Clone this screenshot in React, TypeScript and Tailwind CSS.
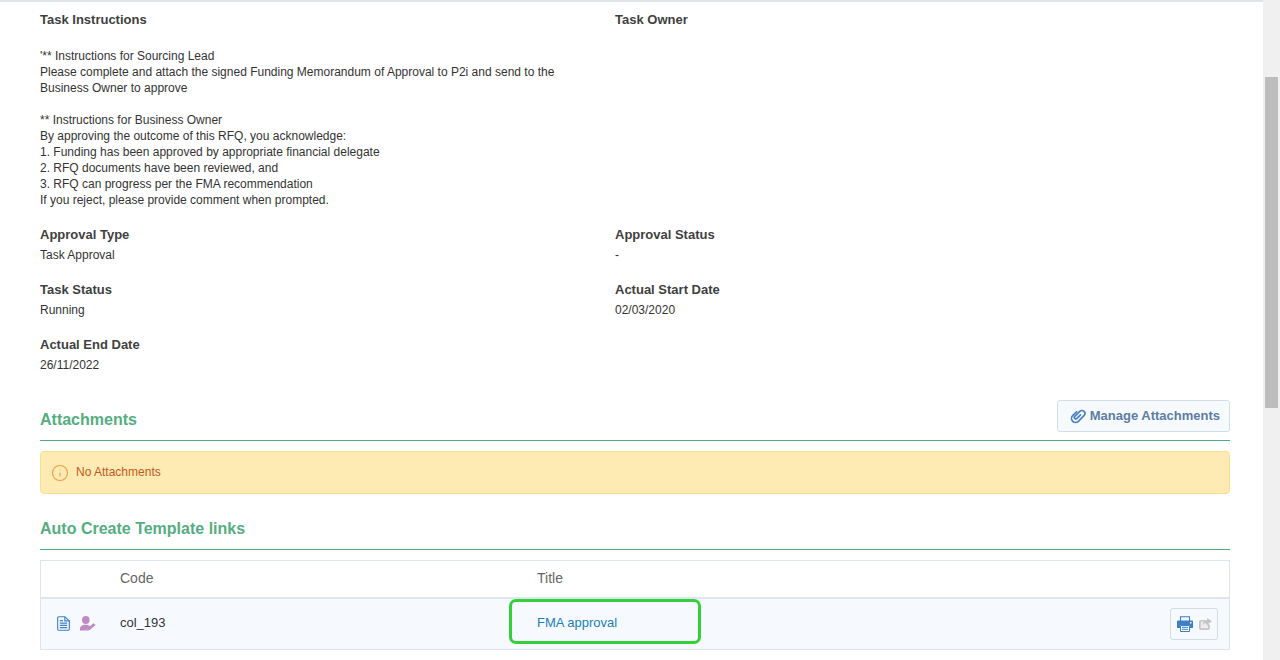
import React from 'react';
import { Info } from 'lucide-react';

function ClipIcon() {
  return (
    <svg width="16" height="16" viewBox="0 0 16 16" fill="none" stroke="#4a80c4" strokeWidth="1.7" strokeLinecap="round">
      <g transform="rotate(45 8 8)">
        <path d="M9 5.500V10.500a1.500 1.500 0 0 1-3 0V3.500a3 3 0 0 1 6 0V11.500a4 4 0 0 1-8 0V6" />
      </g>
    </svg>
  );
}

function DocIcon() {
  return (
    <svg width="13" height="15" viewBox="0 0 14 16" fill="none" stroke="#3f7fc6" strokeWidth="1.2">
      <path d="M1.900.7h6.600l4.800 4.600v8.400a1.500 1.500 0 0 1-1.500 1.600H1.900A1.300 1.300 0 0 1 .7 14V2A1.300 1.300 0 0 1 1.900.7z" />
      <path d="M8.400.9v4.300h4.600" />
      <path d="M3 5h3.500M3 7.600h8M3 10h8M3 12.500h8" strokeWidth="1.300" />
    </svg>
  );
}

function UserPenIcon() {
  return (
    <svg width="16" height="15" viewBox="0 0 16 15" fill="#bd8cc3">
      <ellipse cx="5.800" cy="4" rx="3.800" ry="4" />
      <path d="M0 14.500v-2.300c0-1.900 2.500-2.800 3.800-3.400h3.400c1.200.4 2.400.8 3.100 1.400l-3.300 3.300-.5 1z" />
      <path d="M13.400 7.200l2.300 1.900-6 5-3 .9 1-2.800z" />
    </svg>
  );
}

function PrintIcon() {
  return (
    <svg width="16" height="16" viewBox="0 0 16 16">
      <path d="M3.500 5V.7h9V5" fill="none" stroke="#3f7fc6" strokeWidth="1.100" />
      <path d="M1 4.500h14a1 1 0 0 1 1 1v6a.6.600 0 0 1-.6.600H13V9H3v3.100H.6a.6.600 0 0 1-.6-.6v-6a1 1 0 0 1 1-1z" fill="#3f7fc6" />
      <path d="M3.500 9.500h9v6h-9z" fill="#fff" stroke="#3f7fc6" />
      <path d="M5 11.300h6M5 13.300h6" stroke="#3f7fc6" />
      <rect x="13" y="6" width="1.500" height="1.500" fill="#fff" />
    </svg>
  );
}

function ShareIcon() {
  return (
    <svg width="13" height="12" viewBox="0 0 12 11" fill="none">
      <path d="M5 2.500H1.800a1 1 0 0 0-1 1v5.700a1 1 0 0 0 1 1h6.400a1 1 0 0 0 1-1V7z" fill="#ececec" stroke="#c4c4c4" strokeWidth="1.600" />
      <path d="M7.500 0L12 3 7.500 6V4.300C5.500 4.300 4.300 5 3.500 6.800c0-3 1.500-4.800 4-5z" fill="#c4c4c4" />
    </svg>
  );
}

function Field({ label, value }: { label: string; value: string }) {
  return (
    <div>
      <div className="text-[13px] leading-[20px] pt-[1px] font-bold text-[#3f3f3f]">{label}</div>
      <div className="text-[12px] leading-[16px] mt-[2px] text-[#333]">{value}</div>
    </div>
  );
}

export default function App() {
  return (
    <div className="flex h-[660px] w-[1280px] overflow-hidden bg-white font-['Liberation_Sans',Arial,sans-serif]">
      <div className="flex-1 min-w-0 flex flex-col">
        {/* top shadow */}
        <div className="h-[2px] bg-[#dfe4ea]" />

        <div className="pl-[40px] pr-[33px]">
          {/* Task instructions */}
          <div className="grid grid-cols-[575px_1fr] pt-[8px]">
            <div className="text-[13px] leading-[20px] font-bold text-[#3f3f3f]">Task Instructions</div>
            <div className="text-[13px] leading-[20px] font-bold text-[#3f3f3f]">Task Owner</div>
          </div>
          <div className="mt-[18px] w-[530px] text-[12px] leading-[16px] text-[#333]">
            <div>'** Instructions for Sourcing Lead</div>
            <div>Please complete and attach the signed Funding Memorandum of Approval to P2i and send to the Business Owner to approve</div>
            <div className="h-[16px]" />
            <div>** Instructions for Business Owner</div>
            <div>By approving the outcome of this RFQ, you acknowledge:</div>
            <div>1. Funding has been approved by appropriate financial delegate</div>
            <div>2. RFQ documents have been reviewed, and</div>
            <div>3. RFQ can progress per the FMA recommendation</div>
            <div>If you reject, please provide comment when prompted.</div>
          </div>

          {/* Fields */}
          <div className="grid grid-cols-[575px_1fr] mt-[16px] gap-y-[16px]">
            <Field label="Approval Type" value="Task Approval" />
            <Field label="Approval Status" value="-" />
            <Field label="Task Status" value="Running" />
            <Field label="Actual Start Date" value="02/03/2020" />
            <Field label="Actual End Date" value="26/11/2022" />
          </div>

          {/* Attachments */}
          <div className="flex items-end justify-between border-b border-[#4fae7d] mt-[27px] h-[41px] pb-[8px]">
            <div className="text-[16px] leading-[20px] font-bold text-[#55ad80] mb-[2px]">Attachments</div>
            <button className="flex items-center gap-[4px] h-[32px] pl-[12px] pr-[9px] border border-[#d3dde8] rounded-[3px] bg-[#f7fafd] text-[13px] font-bold text-[#5c7da3]">
              <ClipIcon />
              Manage Attachments
            </button>
          </div>

          <div className="flex items-center h-[43px] mt-[10px] pl-[10px] pb-[2px] gap-[7px] border border-[#fadf90] rounded-[4px] bg-[#fdebb3] text-[12px] text-[#c25a1d]">
            <Info size={18} strokeWidth={1.5} className="text-[#ef9f3f] mt-[2px]" />
            No Attachments
          </div>

          {/* Auto create links */}
          <div className="border-b border-[#4fae7d] mt-[25px] pb-[10px] text-[16px] leading-[20px] font-bold text-[#55ad80]">
            Auto Create Template links
          </div>

          <div className="mt-[10px] border border-[#dbe6f0]">
            <div className="grid grid-cols-[79px_417px_1fr] h-[38px] pb-[2px] items-center border-b-2 border-[#dbe6f0] text-[14px] text-[#666]">
              <div />
              <div>Code</div>
              <div>Title</div>
            </div>
            <div className="grid grid-cols-[79px_417px_1fr_auto] h-[50px] pb-[2px] items-center bg-[#f6fafe] text-[13px] text-[#333]">
              <div className="flex items-center pl-[16px] gap-[10px]">
                <DocIcon />
                <UserPenIcon />
              </div>
              <div>col_193</div>
              <div className="relative text-[#1b7fb5]">
                FMA approval
                <div className="absolute left-[-28px] top-[-14px] w-[192px] h-[45px] border-[3px] border-[#36cf3c] rounded-[7px]" />
              </div>
              <div className="pr-[11px] mt-[2px]">
                <div className="flex items-center justify-center gap-[6px] w-[48px] h-[32px] border border-[#d3dde8] rounded-[3px]">
                  <PrintIcon />
                  <ShareIcon />
                </div>
              </div>
            </div>
          </div>
        </div>
      </div>

      {/* scrollbar */}
      <div className="w-[17px] bg-[#f0f0f0] pt-[77px] px-[2px]">
        <div className="h-[331px] bg-[#bdbdbd]" />
      </div>
    </div>
  );
}
